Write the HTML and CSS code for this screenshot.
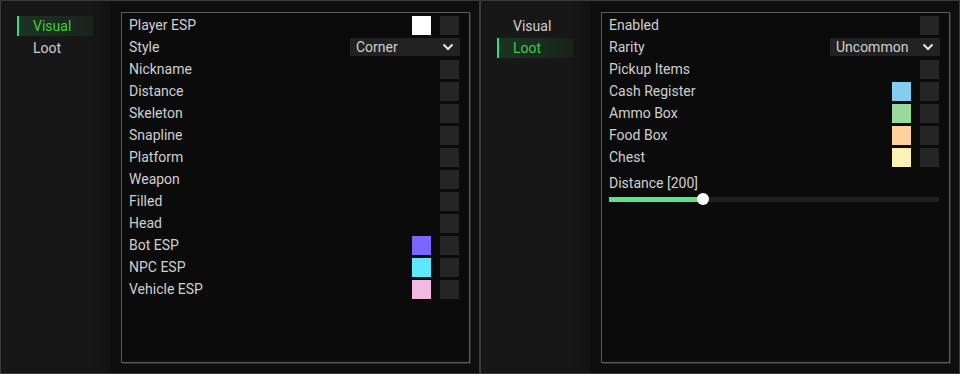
FILE: index.html
```html
<!DOCTYPE html>
<html>
<head>
    <title>ESP Menu</title>
    <link rel="stylesheet" href="styles.css">
</head>
<body>
    <div class="screen">
        <div class="window">
            <div class="sidebar">
                <div class="tab active">Visual</div>
                <div class="tab">Loot</div>
            </div>
            <div class="content">
                <div class="panel">
                    <div class="row">
                        <span class="label">Player ESP</span>
                        <span class="swatch" style="background-color: #ffffff"></span>
                        <span class="check"></span>
                    </div>
                    <div class="row">
                        <span class="label">Style</span>
                        <div class="select">
                            <span>Corner</span>
                            <svg class="chevron" width="12" height="8" viewBox="0 0 12 8"><path d="M1.5 1.5 L6 6 L10.5 1.5" fill="none" stroke="#e6e6e6" stroke-width="2"/></svg>
                        </div>
                    </div>
                    <div class="row"><span class="label">Nickname</span><span class="check"></span></div>
                    <div class="row"><span class="label">Distance</span><span class="check"></span></div>
                    <div class="row"><span class="label">Skeleton</span><span class="check"></span></div>
                    <div class="row"><span class="label">Snapline</span><span class="check"></span></div>
                    <div class="row"><span class="label">Platform</span><span class="check"></span></div>
                    <div class="row"><span class="label">Weapon</span><span class="check"></span></div>
                    <div class="row"><span class="label">Filled</span><span class="check"></span></div>
                    <div class="row"><span class="label">Head</span><span class="check"></span></div>
                    <div class="row">
                        <span class="label">Bot ESP</span>
                        <span class="swatch" style="background-color: #7b66ff"></span>
                        <span class="check"></span>
                    </div>
                    <div class="row">
                        <span class="label">NPC ESP</span>
                        <span class="swatch" style="background-color: #5ce8ff"></span>
                        <span class="check"></span>
                    </div>
                    <div class="row">
                        <span class="label">Vehicle ESP</span>
                        <span class="swatch" style="background-color: #f2bade"></span>
                        <span class="check"></span>
                    </div>
                </div>
            </div>
        </div>

        <div class="window">
            <div class="sidebar">
                <div class="tab">Visual</div>
                <div class="tab active">Loot</div>
            </div>
            <div class="content">
                <div class="panel">
                    <div class="row"><span class="label">Enabled</span><span class="check"></span></div>
                    <div class="row">
                        <span class="label">Rarity</span>
                        <div class="select">
                            <span>Uncommon</span>
                            <svg class="chevron" width="12" height="8" viewBox="0 0 12 8"><path d="M1.5 1.5 L6 6 L10.5 1.5" fill="none" stroke="#e6e6e6" stroke-width="2"/></svg>
                        </div>
                    </div>
                    <div class="row"><span class="label">Pickup Items</span><span class="check"></span></div>
                    <div class="row">
                        <span class="label">Cash Register</span>
                        <span class="swatch" style="background-color: #82cdf0"></span>
                        <span class="check"></span>
                    </div>
                    <div class="row">
                        <span class="label">Ammo Box</span>
                        <span class="swatch" style="background-color: #9ad99c"></span>
                        <span class="check"></span>
                    </div>
                    <div class="row">
                        <span class="label">Food Box</span>
                        <span class="swatch" style="background-color: #ffd19c"></span>
                        <span class="check"></span>
                    </div>
                    <div class="row">
                        <span class="label">Chest</span>
                        <span class="swatch" style="background-color: #fbf3b6"></span>
                        <span class="check"></span>
                    </div>
                    <div class="slider">
                        <div class="slider-label">Distance [200]</div>
                        <div class="track">
                            <div class="fill" style="width: 94px"></div>
                            <div class="knob"></div>
                        </div>
                    </div>
                </div>
            </div>
        </div>
    </div>
</body>
</html>
```

FILE: styles.css
```css
body {
    margin: 0;
    background-color: #0c0c0c;
    font-family: Roboto, "Liberation Sans", sans-serif;
    font-size: 14px;
    color: #cfcfcf;
}

.screen {
    display: flex;
    width: 960px;
    height: 374px;
}

.window {
    display: flex;
    width: 480px;
    height: 374px;
    box-sizing: border-box;
    border: 1px solid #3a3a3a;
    background-color: #0f0f0f;
}

.sidebar {
    width: 109px;
    flex-shrink: 0;
    padding-top: 15px;
    background: linear-gradient(to right, #171717 80%, #131313);
}

.tab {
    width: 76px;
    height: 20px;
    line-height: 20px;
    margin-left: 16px;
    margin-bottom: 2px;
    padding-left: 16px;
    box-sizing: border-box;
    color: #cfcfcf;
}

.tab.active {
    color: #3ccf3e;
    border-left: 2px solid #3fd97a;
    padding-left: 14px;
    background: linear-gradient(to right, #1d3325, #1a2a20 60%, #18221b);
}

.content {
    flex: 1;
    padding: 11px 9px 10px 11px;
    background-color: #0e0e0e;
}

.panel {
    height: 100%;
    box-sizing: border-box;
    padding-top: 1px;
    border: 1px solid #5a5a5a;
    box-shadow: 1px 1px 0 #2a2a2a;
    background-color: #0b0b0b;
}

.row {
    display: flex;
    align-items: center;
    height: 22px;
    padding: 0 10px 0 7px;
}

.label {
    flex: 1;
}

.check {
    width: 19px;
    height: 19px;
    background-color: #252525;
}

.swatch {
    width: 19px;
    height: 19px;
    margin-right: 9px;
}

.select {
    display: flex;
    align-items: center;
    justify-content: space-between;
    width: 110px;
    height: 18px;
    padding: 0 6px;
    margin-right: -1px;
    box-sizing: border-box;
    background-color: #222222;
    color: #d0d0d0;
}

.slider {
    padding: 6px 10px 0 7px;
}

.slider-label {
    height: 18px;
    line-height: 18px;
}

.track {
    position: relative;
    height: 5px;
    margin-top: 5px;
    background-color: #1f1f1f;
}

.fill {
    height: 5px;
    background-color: #5fe08c;
}

.knob {
    position: absolute;
    left: 88px;
    top: -4px;
    width: 12px;
    height: 12px;
    border-radius: 50%;
    background-color: #ffffff;
}
```
